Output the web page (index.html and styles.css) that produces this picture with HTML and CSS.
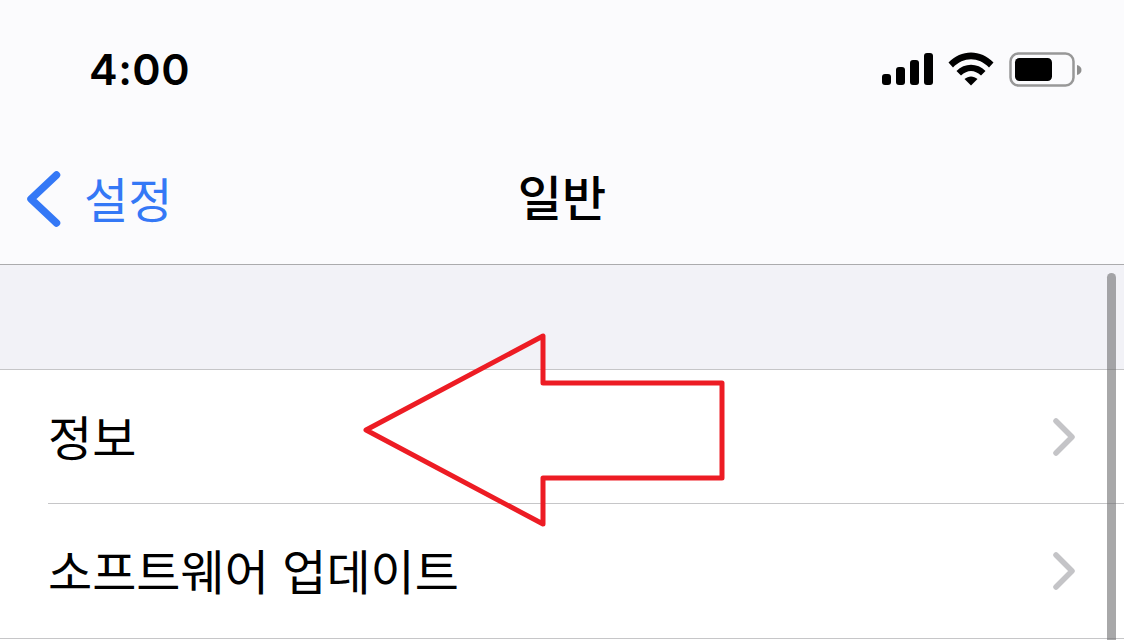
FILE: index.html
```html
<!DOCTYPE html>
<html lang="ko">
<head>
    <meta charset="UTF-8">
    <meta name="viewport" content="width=device-width, initial-scale=1.0">
    <title>일반</title>
    <link rel="stylesheet" href="styles.css">
</head>
<body>
    <div class="screen">
        <header class="top">
            <div class="status">
                <div class="time">4:00</div>
                <div class="status-icons">
                    <svg class="signal" width="52" height="32" viewBox="0 0 52 32">
                        <rect x="0" y="21" width="9" height="11" rx="3"/>
                        <rect x="14" y="14" width="9" height="18" rx="3"/>
                        <rect x="28" y="7" width="9" height="25" rx="3"/>
                        <rect x="42" y="0" width="9" height="32" rx="3"/>
                    </svg>
                    <svg class="wifi" width="46" height="34" viewBox="0 0 46 34">
                        <path d="M0.5 10.5 C13 -3 33 -3 45.5 10.5 L41 15.5 C30.5 4.5 15.5 4.5 5 15.5 Z"/>
                        <path d="M8.5 19 C16.500 10.500 29.500 10.500 37.500 19 L33 23.500 C26.500 17.500 19.500 17.500 13 23.500 Z"/>
                        <path d="M16.500 27 C20.500 23.500 25.500 23.500 29.500 27 L23 33.500 Z"/>
                    </svg>
                    <svg class="battery" width="74" height="36" viewBox="0 0 74 36">
                        <rect x="1.500" y="1.500" width="63" height="32" rx="8" fill="none" stroke="#989898" stroke-width="2.500"/>
                        <rect x="6" y="6" width="37" height="23" rx="4.500" fill="#000"/>
                        <path d="M68 13 C71 14 72.500 15.500 72.500 18 C72.500 20.500 71 22 68 23 Z" fill="#8e8e8e"/>
                    </svg>
                </div>
            </div>
            <nav class="nav">
                <a class="back" href="#">
                    <svg width="36" height="60" viewBox="0 0 36 60">
                        <path d="M30.500 6 L5 30 L30.500 54" fill="none" stroke="#3478f6" stroke-width="7.500" stroke-linecap="round" stroke-linejoin="round"/>
                    </svg>
                    <span>설정</span>
                </a>
                <div class="nav-title">일반</div>
            </nav>
        </header>

        <div class="gap"></div>

        <ul class="list">
            <li class="row">
                <span>정보</span>
                <svg class="chev" width="24" height="38" viewBox="0 0 24 38">
                    <path d="M4 3 L20 19 L4 35" fill="none" stroke="#c4c4c7" stroke-width="5.500" stroke-linecap="round" stroke-linejoin="round"/>
                </svg>
            </li>
            <li class="row">
                <span>소프트웨어 업데이트</span>
                <svg class="chev" width="24" height="38" viewBox="0 0 24 38">
                    <path d="M4 3 L20 19 L4 35" fill="none" stroke="#c4c4c7" stroke-width="5.500" stroke-linecap="round" stroke-linejoin="round"/>
                </svg>
            </li>
        </ul>

        <div class="scrollbar"></div>

        <svg class="arrow" width="1124" height="640" viewBox="0 0 1124 640">
            <polygon points="366,430 543,336 543,383 722,383 722,478 543,478 543,524" fill="none" stroke="#ed1c24" stroke-width="5" stroke-linejoin="round"/>
        </svg>
    </div>
</body>
</html>
```

FILE: styles.css
```css
html, body {
    margin: 0;
    padding: 0;
}

body {
    background: #fff;
    color: #000;
    font-family: "Noto Sans CJK KR", "Noto Sans", sans-serif;
}

.screen {
    position: relative;
    width: 1124px;
    height: 640px;
    overflow: hidden;
}

.top {
    height: 264px;
    background: #fbfbfd;
    border-bottom: 1px solid #ababad;
}

.status {
    height: 132px;
    display: flex;
    justify-content: space-between;
    align-items: flex-start;
    padding: 0 41px 0 89px;
}

.time {
    margin-top: 42px;
    font-family: Inter, "Liberation Sans", sans-serif;
    font-size: 43px;
    font-weight: 600;
    line-height: 54px;
    letter-spacing: 0.5px;
}

.status-icons {
    display: flex;
    align-items: flex-start;
    margin-top: 52px;
}

.signal {
    margin: 1px 0 0 0;
}

.wifi {
    margin: 0 15px 0 14px;
}

.nav {
    position: relative;
    height: 132px;
}

.back {
    position: absolute;
    left: 26px;
    top: 33px;
    display: flex;
    align-items: center;
    gap: 22px;
    color: #3478f6;
    text-decoration: none;
    font-size: 48px;
}

.back span {
    margin-top: -3px;
}

.nav-title {
    text-align: center;
    padding-top: 28px;
    font-size: 48px;
    font-weight: 500;
    line-height: 70px;
}

.gap {
    height: 104px;
    background: #f2f2f7;
    border-bottom: 1px solid #c6c6c8;
}

.list {
    list-style: none;
    margin: 0;
    padding: 0 0 0 48px;
}

.row {
    height: 133px;
    display: flex;
    justify-content: space-between;
    align-items: center;
    padding-right: 48px;
    border-bottom: 1px solid #c6c6c8;
    font-size: 48px;
}

.row span {
    margin-top: -4px;
}

.row:last-child {
    height: 134px;
    margin-left: -48px;
    padding-left: 48px;
}

.scrollbar {
    position: absolute;
    left: 1107px;
    top: 273px;
    width: 9px;
    height: 367px;
    border-radius: 5px 5px 0 0;
    background: rgba(110, 110, 112, 0.6);
}

.arrow {
    position: absolute;
    left: 0;
    top: 0;
}
```
